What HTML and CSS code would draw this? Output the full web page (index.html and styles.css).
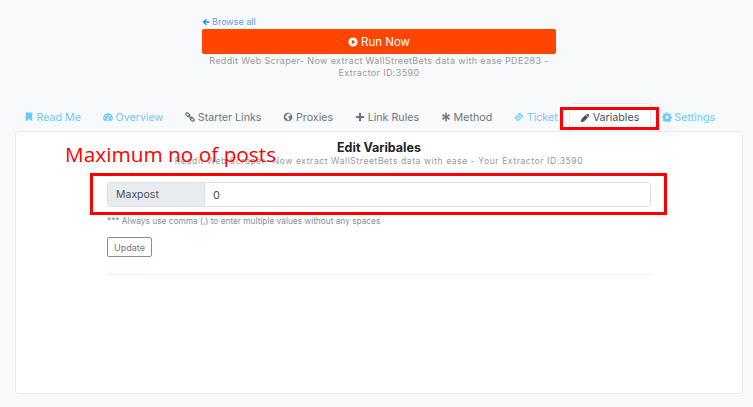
FILE: index.html
```html
<!DOCTYPE html>
<html lang="en">
<head>
  <meta charset="UTF-8">
  <meta name="viewport" content="width=device-width, initial-scale=1.0">
  <title>Edit Variables</title>
  <link rel="stylesheet" href="styles.css">
</head>
<body>
  <div class="top">
    <a class="back" href="#">
      <svg class="ico-back" viewBox="0 0 12 12"><path d="M6 1.2 1 6l5 4.8 1.2-1.2L4.6 7H11V5H4.6l2.6-2.6z"/></svg>
      Browse all
    </a>
    <button class="run" type="button">
      <svg class="ico-play" viewBox="0 0 12 12"><path fill-rule="evenodd" d="M6 .5a5.500 5.500 0 1 0 0 11 5.500 5.500 0 0 0 0-11zM4.500 3.300 9 6 4.500 8.700z"/></svg>
      Run Now
    </button>
    <p class="subtitle">Reddit Web Scraper- Now extract WallStreetBets data with ease PDE283 - Extractor ID:3590</p>
  </div>

  <ul class="tabs">
    <li class="tab tab-blue">
      <svg viewBox="0 0 12 12"><path d="M2 .5h8v11L6 8.500 2 11.500z"/></svg>Read Me
    </li>
    <li class="tab tab-blue">
      <svg viewBox="0 0 12 12"><path fill-rule="evenodd" d="M6 1.500A5.800 5.800 0 0 0 .2 7.300c0 1.300.4 2.400 1.100 3.300h9.400c.7-.9 1.100-2 1.100-3.300A5.800 5.800 0 0 0 6 1.500zM2.300 6.200a.9.9 0 1 1 0 1.800.9.900 0 0 1 0-1.800zM4 3.500a.9.900 0 1 1 0 1.800.9.900 0 0 1 0-1.800zM8 3.500a.9.900 0 1 1 0 1.800.9.900 0 0 1 0-1.800zM9.700 6.200a.9.900 0 1 1 0 1.800.9.900 0 0 1 0-1.800zM6.600 4.500l.6.200-.6 3a1.200 1.200 0 1 1-.7-.1z"/></svg>Overview
    </li>
    <li class="tab">
      <svg viewBox="0 0 12 12"><path fill="none" stroke="currentColor" stroke-width="1.500" d="M3.500 1.300 5.300 3a1.500 1.500 0 0 1 0 2.200 1.500 1.500 0 0 1-2.200 0L1.400 3.500a1.500 1.500 0 0 1 0-2.200 1.500 1.500 0 0 1 2.100 0zM8.700 6.600l1.800 1.800a1.500 1.500 0 0 1 0 2.100 1.500 1.500 0 0 1-2.200 0L6.600 8.800a1.500 1.500 0 0 1 0-2.200 1.500 1.500 0 0 1 2.100 0zM4 4l4 4"/></svg>Starter Links
    </li>
    <li class="tab">
      <svg viewBox="0 0 12 12"><path fill-rule="evenodd" d="M6 .8a5.200 5.200 0 1 0 0 10.400A5.200 5.200 0 0 0 6 .8zM5 2.500l2.500-.6 1.800 1.500-1 1.600-1.600.2-.4 1.400 1.600 1-.6 1.900-1.500.9-.8-2.200-1.700-.9-.6-1.800 1.300-1.200z"/></svg>Proxies
    </li>
    <li class="tab">
      <svg viewBox="0 0 12 12"><path d="M4.700 1h2.600v3.700H11v2.600H7.300V11H4.700V7.300H1V4.700h3.700z"/></svg>Link Rules
    </li>
    <li class="tab">
      <svg viewBox="0 0 12 12"><path d="M4.900 1h2.200l-.3 3.500 2.900-2 1.100 1.900L7.600 6l3.200 1.600-1.100 1.900-2.900-2 .3 3.500H4.900l.3-3.500-2.900 2-1.100-1.900L4.400 6 1.200 4.400l1.100-1.900 2.900 2z"/></svg>Method
    </li>
    <li class="tab tab-blue">
      <svg viewBox="0 0 12 12"><path fill-rule="evenodd" d="M7 1 .8 7.200l1.300 1.300a1.200 1.200 0 0 1 1.500 1.500L5 11.200 11.200 5 9.900 3.700a1.200 1.200 0 0 1-1.500-1.500zM6.800 3.200l2.100 2.100-3.700 3.600-2.100-2.100zM6.800 4.500 4.400 6.800l.8.800 2.400-2.300z"/></svg>Ticket
    </li>
    <li class="tab tab-active">
      <svg viewBox="0 0 12 12"><path d="M8.300 1.200a1 1 0 0 1 1.400 0l1.100 1.100a1 1 0 0 1 0 1.400l-1 1-2.500-2.500zM6.600 2.400 1.800 7.300 1 11l3.700-.8 4.900-4.800z"/></svg>Variables
    </li>
    <li class="tab tab-blue">
      <svg viewBox="0 0 12 12"><path fill-rule="evenodd" d="M5 .7h2l.3 1.500 1 .4 1.300-.8 1.400 1.400-.8 1.300.4 1 1.500.3v2l-1.500.3-.4 1 .8 1.300-1.400 1.400-1.300-.8-1 .4-.3 1.500H5l-.3-1.500-1-.4-1.300.8L1 9.900l.8-1.300-.4-1L-.1 7.300v-2l1.500-.3.4-1L1 2.700 2.400 1.300l1.300.8 1-.4zM6 4.300a1.900 1.900 0 1 0 0 3.800 1.900 1.900 0 0 0 0-3.800z"/></svg>Settings
    </li>
  </ul>

  <div class="card">
    <h1 class="card-title">Edit Varibales</h1>
    <p class="card-sub">Reddit Web Scraper- Now extract WallStreetBets data with ease - Your Extractor ID:3590</p>
    <form class="var-form">
      <div class="input-group">
        <label class="input-label" for="maxpost">Maxpost</label>
        <input class="input-field" id="maxpost" type="text" value="0">
      </div>
      <p class="help">*** Always use comma (,) to enter multiple values without any spaces</p>
      <button class="update" type="button">Update</button>
      <hr class="rule">
    </form>
  </div>

  <!-- annotations drawn over the screenshot -->
  <div class="mark mark-tab"></div>
  <div class="mark mark-input"></div>
  <div class="note">Maximum no of posts</div>
</body>
</html>
```

FILE: styles.css
```css
* {
  box-sizing: border-box;
}

body {
  margin: 0;
  height: 407px;
  overflow: hidden;
  position: relative;
  background-color: #f8f9fa;
  font-family: "Inter", "Open Sans", sans-serif;
  color: #6c757d;
}

.top {
  width: 354px;
  margin-left: 202px;
  padding-top: 14px;
}

.back {
  display: flex;
  align-items: center;
  gap: 2px;
  height: 15px;
  font-size: 9px;
  color: #5a9bf6;
  text-decoration: none;
}

.ico-back {
  width: 8px;
  height: 8px;
  fill: #1d7cf2;
}

.run {
  display: flex;
  align-items: center;
  justify-content: center;
  gap: 3px;
  width: 100%;
  height: 25px;
  border: none;
  border-radius: 2px;
  background-color: #ff4500;
  color: #fff;
  font-family: inherit;
  font-size: 11.5px;
}

.ico-play {
  width: 10px;
  height: 10px;
  fill: #fff;
}

.subtitle {
  margin: 1px 0 0;
  font-size: 9px;
  line-height: 12px;
  letter-spacing: .35px;
  text-align: center;
  color: #999;
}

.tabs {
  display: flex;
  list-style: none;
  margin: 24px 0 0 13px;
  padding: 0;
  height: 28px;
}

.tab {
  display: flex;
  align-items: center;
  gap: 2.500px;
  padding: 0 11px;
  font-size: 10.700px;
  color: #6c757d;
  white-space: nowrap;
}

.tab svg {
  width: 10px;
  height: 10px;
  fill: currentColor;
  flex: none;
}

.tab-blue {
  color: #6bcbfa;
}

.tab-active {
  padding: 0 10.500px;
  background-color: #fff;
  border: 1px solid #e9ecef;
  border-bottom: none;
  border-radius: 3px 3px 0 0;
  color: #495057;
}

.card {
  width: 728px;
  height: 263px;
  margin-left: 15px;
  padding: 8px 91px 0;
  background-color: #fff;
  border: 1px solid #e9ecef;
  border-radius: 3px;
}

.card-title {
  margin: 0;
  font-size: 12.500px;
  line-height: 15px;
  font-weight: 700;
  text-align: center;
  color: #212529;
}

.card-sub {
  margin: 0 -20px;
  font-size: 8.500px;
  line-height: 12px;
  letter-spacing: .6px;
  text-align: center;
  color: #999;
  white-space: nowrap;
}

.var-form {
  margin-top: 15px;
}

.input-group {
  display: flex;
  height: 25px;
  border: 1px solid #dee2e6;
  border-radius: 3px;
  overflow: hidden;
}

.input-label {
  display: flex;
  align-items: center;
  width: 97px;
  padding-left: 8px;
  background-color: #e9ecef;
  border-right: 1px solid #dee2e6;
  font-size: 10.500px;
  color: #495057;
}

.input-field {
  flex: 1;
  border: none;
  padding: 0 8px;
  font-family: inherit;
  font-size: 11px;
  color: #495057;
  background-color: #fff;
}

.help {
  margin: 9px 0 0;
  font-size: 8.300px;
  line-height: 11px;
  color: #868e96;
}

.update {
  display: block;
  width: 45px;
  height: 20px;
  margin-top: 10px;
  padding: 0;
  background-color: #fff;
  border: 1px solid #868e96;
  border-radius: 2px;
  font-family: inherit;
  font-size: 9px;
  color: #6c757d;
}

.rule {
  margin: 17px 0 0;
  border: none;
  border-top: 1px solid #eff1f3;
}

.mark {
  position: absolute;
  border: 3px solid #f00;
}

.mark-tab {
  left: 560px;
  top: 107px;
  width: 99px;
  height: 23px;
}

.mark-input {
  left: 90px;
  top: 173px;
  width: 577px;
  height: 42px;
}

.note {
  position: absolute;
  left: 65px;
  top: 140px;
  font-family: "Open Sans", sans-serif;
  font-size: 20.800px;
  line-height: 28px;
  color: #f00;
  white-space: nowrap;
}
```
